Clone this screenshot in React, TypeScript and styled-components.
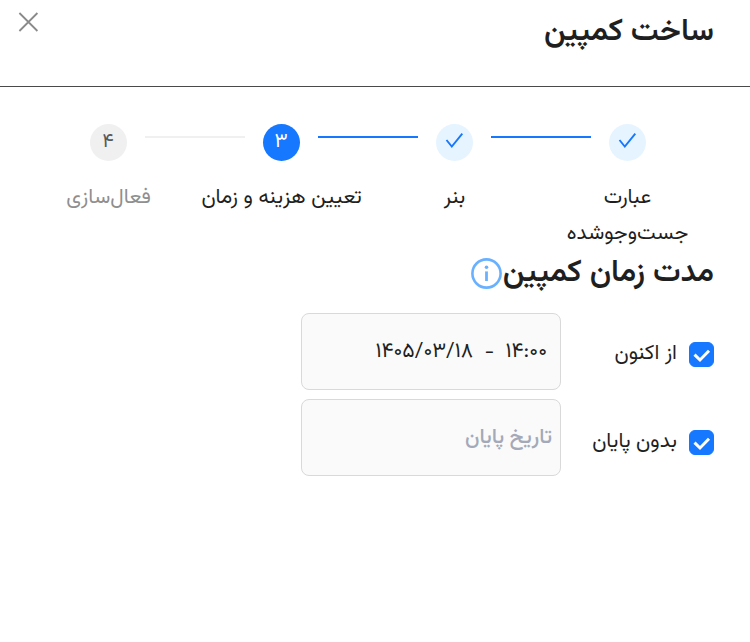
import React from "react";
import styled, { createGlobalStyle } from "styled-components";

const GlobalStyle = createGlobalStyle`
  *, *::before, *::after { box-sizing: border-box; }
  body {
    margin: 0;
    background: #fff;
    color: #1f1f1f;
    font-family: Vazirmatn, "Noto Sans", "DejaVu Sans", sans-serif;
    font-size: 21px;
    line-height: 36px;
  }
  button, input { font: inherit; color: inherit; }
`;

const Header = styled.header`
  display: flex;
  align-items: flex-start;
  justify-content: space-between;
  padding: 12px 36px 32px 16px;
  border-bottom: 1px solid #4a4a4a;
`;

const Title = styled.h1`
  margin: 0;
  font-size: 31px;
  font-weight: 600;
  line-height: 42px;
`;

const CloseButton = styled.button`
  display: flex;
  padding: 0;
  border: 0;
  background: none;
  color: #8a8a8a;
  cursor: pointer;
`;

const Content = styled.main`
  padding: 37px 36px 36px 22px;
`;

const Steps = styled.ol`
  display: grid;
  grid-template-columns: repeat(4, 1fr);
  margin: 0;
  padding: 0;
  list-style: none;
`;

type Status = "done" | "current" | "waiting";

const Step = styled.li<{ $status: Status }>`
  color: ${({ $status }) => ($status === "waiting" ? "#8f8f8f" : "#1f1f1f")};
  text-align: center;
`;

const StepHead = styled.div`
  display: flex;
  align-items: flex-start;
  margin-inline-start: calc(50% - 18px);
  margin-inline-end: calc(18px - 50%);
`;

const marker = {
  done: { background: "#e6f4ff", color: "#1677ff" },
  current: { background: "#1677ff", color: "#fff" },
  waiting: { background: "#f0f0f0", color: "#595959" },
};

const Marker = styled.span<{ $status: Status }>`
  display: flex;
  flex: none;
  align-items: center;
  justify-content: center;
  width: 37px;
  height: 37px;
  padding-bottom: 2px;
  border-radius: 50%;
  font-size: 20px;
  background: ${({ $status }) => marker[$status].background};
  color: ${({ $status }) => marker[$status].color};
`;

const Connector = styled.span<{ $reached: boolean }>`
  flex: 1;
  height: 2px;
  margin: 12px 18px 0;
  background: ${({ $reached }) => ($reached ? "#1677ff" : "#f0f0f0")};
`;

const StepLabel = styled.div<{ $wide: boolean }>`
  padding: 19px ${({ $wide }) => ($wide ? "0" : "18px")} 0;
`;

const SectionTitle = styled.h2`
  display: flex;
  align-items: center;
  gap: 1px;
  font-size: 31px;
  font-weight: 600;
  line-height: 42px;
  margin: 1px 0 0;
`;

const InfoButton = styled.button`
  display: flex;
  padding: 0 0 1px;
  border: 0;
  background: none;
  color: #69b1ff;
`;

const Period = styled.form`
  display: flex;
  margin-top: 18px;
`;

const Options = styled.div`
  display: flex;
  flex: none;
  flex-direction: column;
  gap: 52px;
  width: 153px;
  padding-top: 23px;
`;

const Option = styled.label`
  display: flex;
  align-items: center;
  gap: 12px;
  white-space: nowrap;
`;

const TickBox = styled.span`
  display: grid;

  > * { grid-area: 1 / 1; }
  > svg { pointer-events: none; }
  > input:not(:checked) + svg { visibility: hidden; }
`;

const Tick = styled.input`
  appearance: none;
  width: 25px;
  height: 25px;
  margin: 0;
  border: 1px solid #d9d9d9;
  border-radius: 6px;
  background: #fff;

  &:checked {
    border-color: #1677ff;
    background: #1677ff;
  }
`;

const Dates = styled.div`
  display: flex;
  flex: 0 1 260px;
  flex-direction: column;
  gap: 9px;
  min-width: 0;
`;

const DateField = styled.input`
  width: 100%;
  height: 77px;
  padding: 0 8px;
  border: 1px solid #d9d9d9;
  border-radius: 8px;
  background: #fafafa;

  &:not(:placeholder-shown) { padding-inline-start: 13px; }
  &::placeholder { color: #a3a9b8; font-weight: 500; opacity: 1; }
`;

const CheckIcon = () => (
  <svg width="20" height="24" viewBox="0 0 20 24" fill="none" stroke="currentColor" strokeWidth="1.9" aria-hidden="true">
    <path d="M2.5 10 7.8 16.5 18.3 3.7" />
  </svg>
);

const CloseIcon = () => (
  <svg width="24" height="20" viewBox="0 0 24 20" fill="none" stroke="currentColor" strokeWidth="1.8" aria-hidden="true">
    <path d="M3.4 1 21.4 19M21.4 1 3.4 19" />
  </svg>
);

const InfoIcon = () => (
  <svg width="31" height="31" viewBox="0 0 31 31" fill="none" stroke="currentColor" aria-hidden="true">
    <circle cx="15.5" cy="15.5" r="14.1" strokeWidth="2.6" />
    <path d="M15.5 13.4V23" strokeWidth="2.8" />
    <circle cx="15.5" cy="9.2" r="1.8" fill="currentColor" stroke="none" />
  </svg>
);

const steps: { label: string; status: Status; number: string }[] = [
  { label: "عبارت جست‌وجوشده", status: "done", number: "۱" },
  { label: "بنر", status: "done", number: "۲" },
  { label: "تعیین هزینه و زمان", status: "current", number: "۳" },
  { label: "فعال‌سازی", status: "waiting", number: "۴" },
];

function Checkbox({ label }: { label: string }) {
  return (
    <Option>
      <TickBox>
        <Tick type="checkbox" defaultChecked />
        <svg width="25" height="25" viewBox="0 0 25 25" fill="none" stroke="#fff" strokeWidth="3" aria-hidden="true">
          <path d="M5.5 12.6 11 18 20 8.8" />
        </svg>
      </TickBox>
      {label}
    </Option>
  );
}

export default function App() {
  return (
    <div dir="rtl" lang="fa">
      <GlobalStyle />
      <Header>
        <Title>ساخت کمپین</Title>
        <CloseButton type="button" aria-label="بستن">
          <CloseIcon />
        </CloseButton>
      </Header>
      <Content>
        <Steps>
          {steps.map(({ label, status, number }, i) => (
            <Step key={label} $status={status} aria-current={status === "current" ? "step" : undefined}>
              <StepHead>
                <Marker $status={status}>{status === "done" ? <CheckIcon /> : number}</Marker>
                {i < steps.length - 1 && <Connector $reached={status === "done"} />}
              </StepHead>
              <StepLabel $wide={status === "current"}>{label}</StepLabel>
            </Step>
          ))}
        </Steps>
        <SectionTitle>
          مدت زمان کمپین
          <InfoButton type="button" aria-label="راهنما">
            <InfoIcon />
          </InfoButton>
        </SectionTitle>
        <Period>
          <Options>
            <Checkbox label="از اکنون" />
            <Checkbox label="بدون پایان" />
          </Options>
          <Dates>
            <DateField aria-label="تاریخ شروع" placeholder="تاریخ شروع" defaultValue="۱۴:۰۰  -  ۱۴۰۵/۰۳/۱۸" />
            <DateField aria-label="تاریخ پایان" placeholder="تاریخ پایان" />
          </Dates>
        </Period>
      </Content>
    </div>
  );
}
